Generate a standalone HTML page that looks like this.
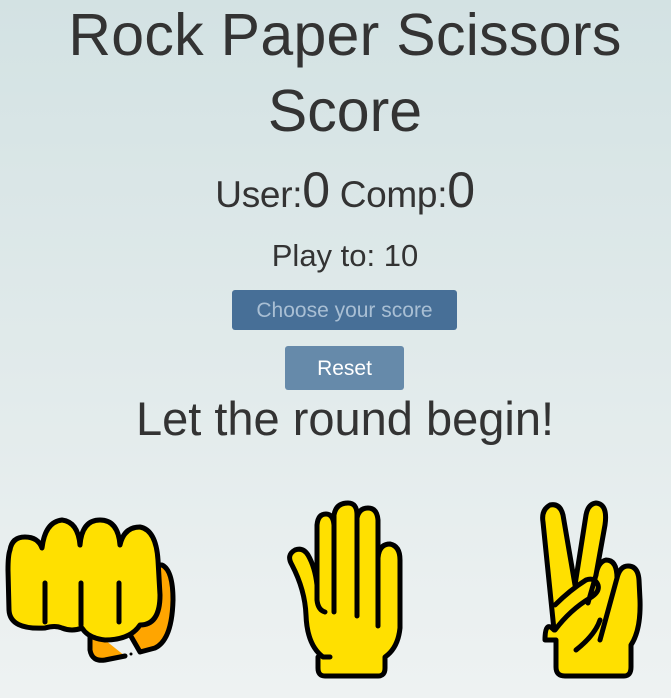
<!DOCTYPE html>
<html><head><meta charset="utf-8"><style>
html,body{margin:0;padding:0}
body{width:671px;height:698px;overflow:hidden;background:linear-gradient(#d3e2e3,#eef2f2);font-family:"Liberation Sans",sans-serif;color:#333;position:relative}
.c{position:absolute;left:0;width:690px;text-align:center;white-space:nowrap}
.btn{position:absolute;border-radius:3px;text-align:center}
svg{position:absolute}
</style></head><body>
<div class="c" style="top:2px;font-size:59px;line-height:66px;letter-spacing:0.3px">Rock Paper Scissors</div>
<div class="c" style="top:78px;font-size:59px;line-height:66px">Score</div>
<div class="c" style="top:166px;font-size:37px;line-height:48px;letter-spacing:-0.3px">User:<span style="font-size:50px">0</span> Comp:<span style="font-size:50px">0</span></div>
<div class="c" style="top:238px;font-size:31px;line-height:36px">Play to: 10</div>
<div class="btn" style="left:232px;top:290px;width:225px;height:40px;background:#476f97;color:#a9bfd4;font-size:21px;line-height:42px">Choose your score</div>
<div class="btn" style="left:285px;top:346px;width:119px;height:44px;background:#668aaa;color:#fff;font-size:21px;line-height:46px">Reset</div>
<div class="c" style="top:392px;font-size:47px;line-height:54px">Let the round begin!</div>

<svg style="left:0;top:0" width="671" height="698" viewBox="0 0 671 698">
<g stroke="#000" stroke-width="5" stroke-linecap="round" stroke-linejoin="round">
<!-- fist -->
<path d="M90 628 L90 650 Q92 662 105 660 L125 656 M140 652 L155 648 Q172 640 173 600 Q173 570 162 565 L90 565 Z" fill="#ffa500"/>
<path d="M10 550 Q12 537 25 537 Q38 537 42 548 Q45 522 62 520 Q78 522 80 545 Q82 520 100 520 Q118 520 120 545 Q124 527 140 527 Q156 530 158 560 L160 595 Q160 625 140 625 Q130 640 105 640 Q88 638 82 628 Q72 632 62 628 Q55 625 45 628 Q10 630 9 610 L8 570 Q8 555 10 550 Z" fill="#ffe000"/>
<path d="M45 583 L45 622 M81 583 L81 625 M119 583 L119 622" fill="none"/>
<circle cx="131" cy="654" r="1.5" fill="#000" stroke="none"/>
<!-- hand -->
<path d="M330 657 L323 657 Q307 645 306 615 Q305 590 292 565 Q286 555 295 550 Q303 547 308 555 Q315 567 317 585 L317 525 Q318 514 326 514 Q333 514 334 525 L334 515 Q336 503 348 503 Q357 503 357 515 L357 518 Q359 508 368 508 Q377 508 378 520 L378 558 Q379 544 390 544 Q400 546 400 560 L400 628 Q398 648 385 657 L385 668 Q385 676 378 676 L325 676 Q318 676 318 668 L318 657" fill="#ffe000"/>
<path d="M317 585 L317 600 Q318 610 325 612 M334 525 L334 612 M357 518 L357 616 M378 558 L378 626 M400 570 L400 610" fill="none"/>
<!-- V -->
<path d="M556 640 L556 667 Q556 676 565 676 L624 676 Q631 676 631 667 L631 645 Q641 630 640 600 L639 580 Q638 566 628 566 Q620 566 617 578 Q617 560 606 560 Q598 562 596 575 L605 525 Q608 504 596 503 Q588 504 586 515 L575 585 L563 515 Q560 503 550 505 Q541 510 543 522 L554 630 Q545 620 545 640 Z" fill="#ffe000"/>
<path d="M555 630 Q570 610 590 598 Q600 592 598 585 Q595 577 586 580 Q570 590 555 605 M596 575 L588 603 M617 578 L600 640 M576 650 Q595 635 600 620" fill="none"/>
</g></svg>
</body></html>
